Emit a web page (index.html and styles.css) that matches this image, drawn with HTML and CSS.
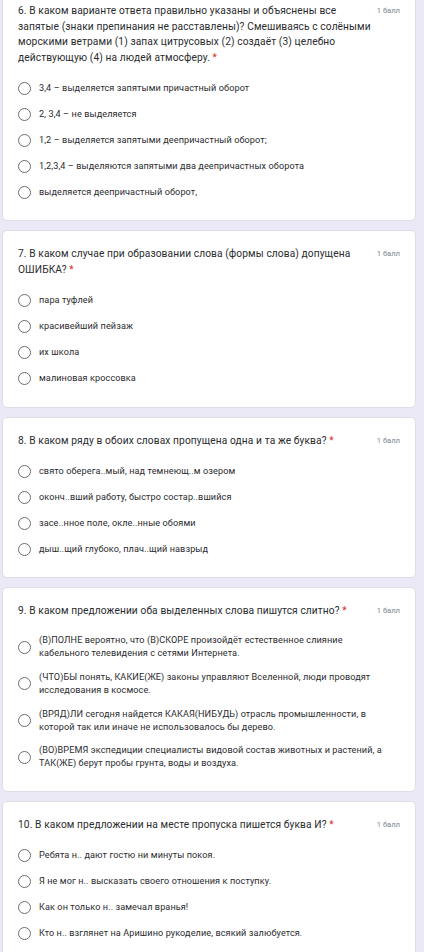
FILE: index.html
```html
<!DOCTYPE html>
<html lang="ru">
<head>
<meta charset="utf-8">
<title>Тест</title>
<link rel="stylesheet" href="styles.css">
</head>
<body>
<main class="form">
  <section class="card">
    <div class="q-head">
      <div class="q-title">6. В каком варианте ответа правильно указаны и объяснены все запятые (знаки препинания не расставлены)? Смешиваясь с солёными морскими ветрами (1) запах цитрусовых (2) создаёт (3) целебно действующую (4) на людей атмосферу. <span class="req">*</span></div>
      <div class="q-points">1 балл</div>
    </div>
    <ul class="opts">
      <li class="opt"><span class="radio"></span><span class="opt-text">3,4 – выделяется запятыми причастный оборот</span></li>
      <li class="opt"><span class="radio"></span><span class="opt-text">2, 3,4 – не выделяется</span></li>
      <li class="opt"><span class="radio"></span><span class="opt-text">1,2 – выделяется запятыми деепричастный оборот;</span></li>
      <li class="opt"><span class="radio"></span><span class="opt-text">1,2,3,4 – выделяются запятыми два деепричастных оборота</span></li>
      <li class="opt"><span class="radio"></span><span class="opt-text">выделяется деепричастный оборот,</span></li>
    </ul>
  </section>

  <section class="card">
    <div class="q-head">
      <div class="q-title">7. В каком случае при образовании слова (формы слова) допущена ОШИБКА? <span class="req">*</span></div>
      <div class="q-points">1 балл</div>
    </div>
    <ul class="opts">
      <li class="opt"><span class="radio"></span><span class="opt-text">пара туфлей</span></li>
      <li class="opt"><span class="radio"></span><span class="opt-text">красивейший пейзаж</span></li>
      <li class="opt"><span class="radio"></span><span class="opt-text">их школа</span></li>
      <li class="opt"><span class="radio"></span><span class="opt-text">малиновая кроссовка</span></li>
    </ul>
  </section>

  <section class="card">
    <div class="q-head">
      <div class="q-title">8. В каком ряду в обоих словах пропущена одна и та же буква? <span class="req">*</span></div>
      <div class="q-points">1 балл</div>
    </div>
    <ul class="opts">
      <li class="opt"><span class="radio"></span><span class="opt-text">свято оберега..мый, над темнеющ..м озером</span></li>
      <li class="opt"><span class="radio"></span><span class="opt-text">оконч..вший работу, быстро состар..вшийся</span></li>
      <li class="opt"><span class="radio"></span><span class="opt-text">засе..нное поле, окле..нные обоями</span></li>
      <li class="opt"><span class="radio"></span><span class="opt-text">дыш..щий глубоко, плач..щий навзрыд</span></li>
    </ul>
  </section>

  <section class="card">
    <div class="q-head">
      <div class="q-title">9. В каком предложении оба выделенных слова пишутся слитно? <span class="req">*</span></div>
      <div class="q-points">1 балл</div>
    </div>
    <ul class="opts">
      <li class="opt opt-multi"><span class="radio"></span><span class="opt-text">(В)ПОЛНЕ вероятно, что (В)СКОРЕ произойдёт естественное слияние кабельного телевидения с сетями Интернета.</span></li>
      <li class="opt opt-multi"><span class="radio"></span><span class="opt-text">(ЧТО)БЫ понять, КАКИЕ(ЖЕ) законы управляют Вселенной, люди проводят исследования в космосе.</span></li>
      <li class="opt opt-multi"><span class="radio"></span><span class="opt-text">(ВРЯД)ЛИ сегодня найдется КАКАЯ(НИБУДЬ) отрасль промышленности, в которой так или иначе не использовалось бы дерево.</span></li>
      <li class="opt opt-multi"><span class="radio"></span><span class="opt-text">(ВО)ВРЕМЯ экспедиции специалисты видовой состав животных и растений, а ТАК(ЖЕ) берут пробы грунта, воды и воздуха.</span></li>
    </ul>
  </section>

  <section class="card">
    <div class="q-head">
      <div class="q-title">10. В каком предложении на месте пропуска пишется буква И? <span class="req">*</span></div>
      <div class="q-points">1 балл</div>
    </div>
    <ul class="opts">
      <li class="opt"><span class="radio"></span><span class="opt-text">Ребята н.. дают гостю ни минуты покоя.</span></li>
      <li class="opt"><span class="radio"></span><span class="opt-text">Я не мог н.. высказать своего отношения к поступку.</span></li>
      <li class="opt"><span class="radio"></span><span class="opt-text">Как он только н.. замечал вранья!</span></li>
      <li class="opt"><span class="radio"></span><span class="opt-text">Кто н.. взглянет на Аришино рукоделие, всякий залюбуется.</span></li>
    </ul>
  </section>
</main>
</body>
</html>
```

FILE: styles.css
```css
* { box-sizing: border-box; }

html, body {
  margin: 0;
  padding: 0;
  background: #ece9f6;
}

body {
  width: 424px;
  height: 952px;
  overflow: hidden;
  font-family: Roboto, "Liberation Sans", Arial, sans-serif;
  color: #202124;
}

.form {
  display: flex;
  flex-direction: column;
  gap: 9px;
  margin-top: -13px;
  padding-left: 2px;
}

.card {
  width: 414px;
  background: #ffffff;
  border: 1px solid #dedce6;
  border-radius: 5px;
  padding: 15px;
}

.q-head {
  display: flex;
  align-items: flex-start;
}

.q-title {
  flex: 1;
  min-width: 0;
  font-size: 10.2px;
  line-height: 15.6px;
  letter-spacing: 0.1px;
  color: #2a2b2e;
}

.req {
  color: #d93025;
}

.q-points {
  flex: none;
  width: 28px;
  text-align: right;
  font-size: 7.6px;
  line-height: 15.6px;
  color: #80858a;
  white-space: nowrap;
}

.opts {
  list-style: none;
  margin: 10px 0 0 0;
  padding: 0;
}

.opt {
  display: flex;
  align-items: center;
  min-height: 26px;
}

.opt-multi {
  padding: 5.4px 0;
}

.radio {
  flex: none;
  width: 13px;
  height: 13px;
  border: 1.3px solid #6a6e72;
  border-radius: 50%;
  margin-right: 8px;
}

.opt-text {
  font-size: 9.1px;
  line-height: 13px;
  color: #2a2b2e;
  max-width: 350px;
  letter-spacing: 0.1px;
}
```
